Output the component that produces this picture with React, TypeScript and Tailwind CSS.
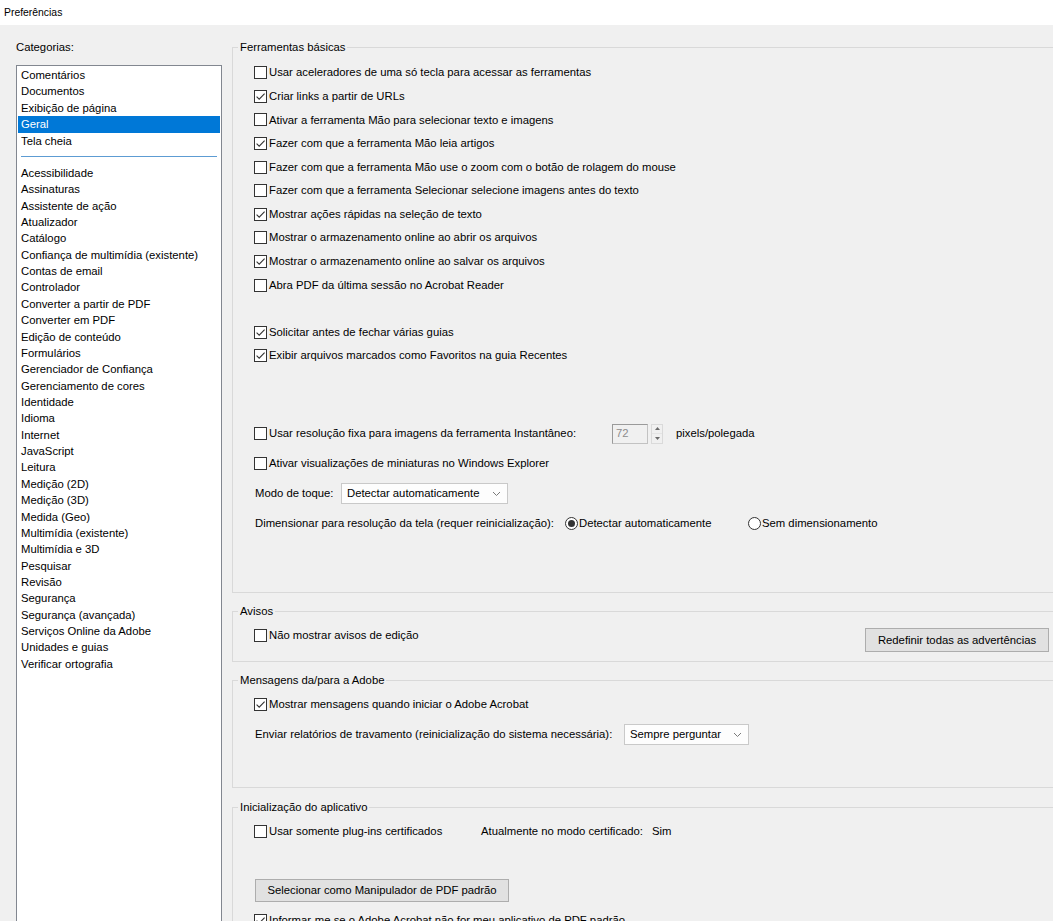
import React from "react";

const FONT = "font-['Liberation_Sans',Arial,sans-serif]";

function Check({ checked = false }: { checked?: boolean }) {
  return (
    <span className="w-[13px] h-[13px] border border-[#333333] bg-white flex items-center justify-center shrink-0">
      {checked && (
        <svg width="11" height="11" viewBox="0 0 11 11">
          <path d="M1.6 5.6 L4.2 8.2 L9.6 2.6" fill="none" stroke="#333" strokeWidth="1.1" />
        </svg>
      )}
    </span>
  );
}

function Radio({ checked = false }: { checked?: boolean }) {
  return (
    <span className="w-[13px] h-[13px] rounded-full border border-[#333333] bg-white flex items-center justify-center shrink-0">
      {checked && <span className="w-[7px] h-[7px] rounded-full bg-[#333333]" />}
    </span>
  );
}

function CheckRow({ label, checked = false }: { label: string; checked?: boolean }) {
  return (
    <div className="flex items-center h-[23.6px]">
      <Check checked={checked} />
      <span className="ml-[2px] whitespace-nowrap">{label}</span>
    </div>
  );
}

function Chevron() {
  return (
    <svg width="9" height="6" viewBox="0 0 9 6">
      <path d="M1 1 L4.5 4.5 L8 1" fill="none" stroke="#7a7a7a" strokeWidth="1" />
    </svg>
  );
}

function Dropdown({ value, width }: { value: string; width: string }) {
  return (
    <div className={`${width} h-[21px] border border-[#c9c9c9] bg-[#fdfdfd] flex items-center justify-between pl-[5px] pr-[6px]`}>
      <span className="whitespace-nowrap">{value}</span>
      <Chevron />
    </div>
  );
}

function Group({
  title,
  height,
  children,
  className = "",
}: {
  title: string;
  height: string;
  children: React.ReactNode;
  className?: string;
}) {
  return (
    <fieldset className={`border border-[#d9d9d9] shrink-0 ${height} w-[830px] ${className}`}>
      <legend className="ml-[5px] px-[2px] leading-[14px] whitespace-nowrap">{title}</legend>
      {children}
    </fieldset>
  );
}

const topItems = ["Comentários", "Documentos", "Exibição de página", "Geral", "Tela cheia"];
const items = [
  "Acessibilidade",
  "Assinaturas",
  "Assistente de ação",
  "Atualizador",
  "Catálogo",
  "Confiança de multimídia (existente)",
  "Contas de email",
  "Controlador",
  "Converter a partir de PDF",
  "Converter em PDF",
  "Edição de conteúdo",
  "Formulários",
  "Gerenciador de Confiança",
  "Gerenciamento de cores",
  "Identidade",
  "Idioma",
  "Internet",
  "JavaScript",
  "Leitura",
  "Medição (2D)",
  "Medição (3D)",
  "Medida (Geo)",
  "Multimídia (existente)",
  "Multimídia e 3D",
  "Pesquisar",
  "Revisão",
  "Segurança",
  "Segurança (avançada)",
  "Serviços Online da Adobe",
  "Unidades e guias",
  "Verificar ortografia",
];

const basic: [string, boolean][] = [
  ["Usar aceleradores de uma só tecla para acessar as ferramentas", false],
  ["Criar links a partir de URLs", true],
  ["Ativar a ferramenta Mão para selecionar texto e imagens", false],
  ["Fazer com que a ferramenta Mão leia artigos", true],
  ["Fazer com que a ferramenta Mão use o zoom com o botão de rolagem do mouse", false],
  ["Fazer com que a ferramenta Selecionar selecione imagens antes do texto", false],
  ["Mostrar ações rápidas na seleção de texto", true],
  ["Mostrar o armazenamento online ao abrir os arquivos", false],
  ["Mostrar o armazenamento online ao salvar os arquivos", true],
  ["Abra PDF da última sessão no Acrobat Reader", false],
];

export default function App() {
  return (
    <div className={`${FONT} text-[11.3px] text-black w-[1053px] h-[921px] overflow-hidden bg-[#f0f0f0] flex flex-col`}>
      {/* Title bar */}
      <div className="h-[25px] bg-white flex items-center pl-[4px] shrink-0">
        <span className="text-[10.4px]">Preferências</span>
      </div>

      <div className="flex flex-1 min-h-0">
        {/* Left: categories */}
        <div className="pl-[16px] pt-[15px] w-[222px] shrink-0 flex flex-col">
          <div className="leading-[14px]">Categorias:</div>
          <div className="mt-[11px] w-[206px] h-[900px] bg-white border border-[#828790] pt-[1px] px-[1px] shrink-0">
            {topItems.map((t) => (
              <div
                key={t}
                className={`h-[16.4px] leading-[16.4px] pl-[3px] whitespace-nowrap ${
                  t === "Geral" ? "bg-[#0078d7] text-white" : ""
                }`}
              >
                {t}
              </div>
            ))}
            <div className="h-[16px] flex items-center px-[3px]">
              <div className="h-[1px] w-full bg-[#5d9cd3]" />
            </div>
            {items.map((t) => (
              <div key={t} className="h-[16.37px] leading-[16.37px] pl-[3px] whitespace-nowrap">
                {t}
              </div>
            ))}
          </div>
        </div>

        {/* Right: settings */}
        <div className="ml-[10px] pt-[15px] flex flex-col shrink-0">
          <Group title="Ferramentas básicas" height="h-[553px]">
            <div className="pl-[21px] pt-[7px]">
              {basic.map(([l, c]) => (
                <CheckRow key={l} label={l} checked={c} />
              ))}
              <div className="h-[23.6px]" />
              <CheckRow label="Solicitar antes de fechar várias guias" checked />
              <CheckRow label="Exibir arquivos marcados como Favoritos na guia Recentes" checked />

              <div className="mt-[51px] h-[30px] flex items-center">
                <div className="w-[358px] flex items-center">
                  <Check />
                  <span className="ml-[2px] whitespace-nowrap">
                    Usar resolução fixa para imagens da ferramenta Instantâneo:
                  </span>
                </div>
                <div className="w-[36px] h-[20px] border border-[#c2c2c2] border-t-[#9a9a9a] border-l-[#9a9a9a] bg-[#f0f0f0] flex items-center pl-[3px] text-[#8c8c8c]">
                  72
                </div>
                <div className="ml-[3px] w-[12px] h-[20px] flex flex-col border border-[#dadada]">
                  <div className="flex-1 flex items-center justify-center border-b border-[#e4e4e4]">
                    <svg width="5" height="3" viewBox="0 0 5 3">
                      <path d="M0 3 L2.5 0 L5 3 Z" fill="#6a6a6a" />
                    </svg>
                  </div>
                  <div className="flex-1 flex items-center justify-center">
                    <svg width="5" height="3" viewBox="0 0 5 3">
                      <path d="M0 0 L2.5 3 L5 0 Z" fill="#6a6a6a" />
                    </svg>
                  </div>
                </div>
                <span className="ml-[13px] whitespace-nowrap">pixels/polegada</span>
              </div>

              <div className="h-[30px] flex items-center">
                <Check />
                <span className="ml-[2px] whitespace-nowrap">
                  Ativar visualizações de miniaturas no Windows Explorer
                </span>
              </div>

              <div className="h-[30px] flex items-center pl-[1px]">
                <span className="w-[86px] whitespace-nowrap">Modo de toque:</span>
                <Dropdown value="Detectar automaticamente" width="w-[167px]" />
              </div>

              <div className="h-[30px] flex items-center pl-[1px]">
                <span className="w-[310px] whitespace-nowrap">
                  Dimensionar para resolução da tela (requer reinicialização):
                </span>
                <div className="w-[183px] flex items-center">
                  <Radio checked />
                  <span className="ml-[1px] whitespace-nowrap">Detectar automaticamente</span>
                </div>
                <div className="flex items-center">
                  <Radio />
                  <span className="ml-[1px] whitespace-nowrap">Sem dimensionamento</span>
                </div>
              </div>
            </div>
          </Group>

          <Group title="Avisos" height="h-[58px]" className="mt-[11px]">
            <div className="pl-[21px] pt-[5px] flex items-start">
              <div className="w-[611px] h-[24px] flex items-center">
                <Check />
                <span className="ml-[2px] whitespace-nowrap">Não mostrar avisos de edição</span>
              </div>
              <div className="mt-[5px] w-[184px] h-[24px] bg-[#e1e1e1] border border-[#adadad] flex items-center justify-center whitespace-nowrap">
                Redefinir todas as advertências
              </div>
            </div>
          </Group>

          <Group title="Mensagens da/para a Adobe" height="h-[115px]" className="mt-[11px]">
            <div className="pl-[21px] pt-[5px]">
              <div className="h-[24px] flex items-center">
                <Check checked />
                <span className="ml-[2px] whitespace-nowrap">
                  Mostrar mensagens quando iniciar o Adobe Acrobat
                </span>
              </div>
              <div className="h-[37px] flex items-center pl-[1px]">
                <span className="w-[369px] whitespace-nowrap">
                  Enviar relatórios de travamento (reinicialização do sistema necessária):
                </span>
                <Dropdown value="Sempre perguntar" width="w-[125px]" />
              </div>
            </div>
          </Group>

          <Group title="Inicialização do aplicativo" height="h-[200px]" className="mt-[12px]">
            <div className="pl-[21px] pt-[5px]">
              <div className="h-[24px] flex items-center">
                <div className="w-[227px] flex items-center">
                  <Check />
                  <span className="ml-[2px] whitespace-nowrap">Usar somente plug-ins certificados</span>
                </div>
                <span className="w-[171px] whitespace-nowrap">Atualmente no modo certificado:</span>
                <span>Sim</span>
              </div>
              <div className="mt-[36px] ml-[1px] w-[254px] h-[23px] bg-[#e1e1e1] border border-[#adadad] flex items-center justify-center whitespace-nowrap">
                Selecionar como Manipulador de PDF padrão
              </div>
              <div className="mt-[6px] h-[24px] flex items-center">
                <Check checked />
                <span className="ml-[2px] whitespace-nowrap">
                  Informar-me se o Adobe Acrobat não for meu aplicativo de PDF padrão
                </span>
              </div>
            </div>
          </Group>
        </div>
      </div>
    </div>
  );
}
